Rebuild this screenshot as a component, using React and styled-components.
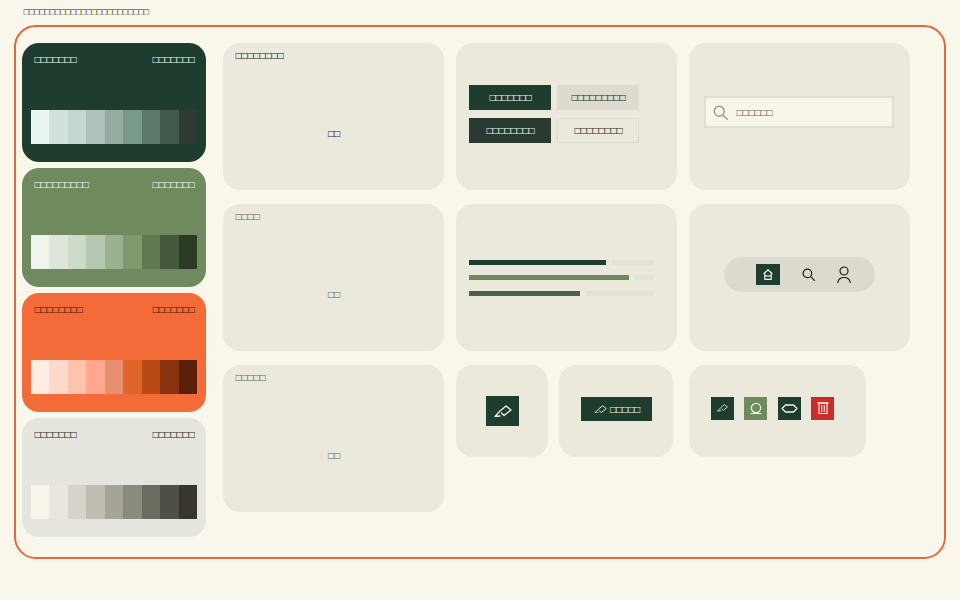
import React from "react";
import styled, { createGlobalStyle } from "styled-components";

const GlobalStyle = createGlobalStyle`
  html, body {
    margin: 0;
    padding: 0;
    background: #F9F6EC;
  }
  body {
    font-family: "DejaVu Sans", sans-serif;
    font-size: 8px;
    letter-spacing: -1.56px;
    white-space: nowrap;
    width: 960px;
    height: 600px;
    overflow: hidden;
  }
`;

// the labels show as empty boxes in the reference
const box = (n) => "\u25A1".repeat(n);

const ramps = [
  {
    name: box(7), note: box(7), bg: "#1F3D2E", fg: "#E8F5F0",
    colors: ["#E8F5F0", "#D2E1DC", "#C6D6D0", "#AEC2B9", "#95ADA1", "#789A88", "#5B7A69", "#43594D", "#2F3A32"],
  },
  {
    name: box(9), note: box(7), bg: "#6F8A5E", fg: "#F0F4EC",
    colors: ["#F0F4EC", "#DEE5DB", "#CDD9C9", "#B5C7B0", "#9AB08F", "#7F9A6E", "#5F7A50", "#46593C", "#2C3A24"],
  },
  {
    name: box(8), note: box(7), bg: "#F26B38", fg: "#4A1A06",
    colors: ["#FFEDE4", "#FFDACB", "#FFC3AE", "#FFA88F", "#E88F72", "#E06528", "#B84A14", "#88330F", "#5A2009"],
  },
  {
    name: box(7), note: box(7), bg: "#E6E5DD", fg: "#2A2A22",
    colors: ["#F8F5EA", "#E8E6DF", "#D6D4CA", "#BFBDB2", "#A6A499", "#8B8A7E", "#6C6B5F", "#504F45", "#38362C"],
  },
];

const bars = [
  { width: 137, color: "#1F3D2E" },
  { width: 160, color: "#6F8A5E" },
  { width: 111, color: "#4A6350" },
];

const KnifeIcon = ({ width = 18 }) => (
  <svg width={width} viewBox="0 0 18 12" fill="none" stroke="currentColor" strokeWidth="1.3" strokeLinejoin="round" strokeLinecap="round">
    <path d="M1 11.5 L6 11 M1 11.5 L6 6 L12 1 L17 5 L10 10.5 L7.5 8" />
  </svg>
);

const RingIcon = () => (
  <svg width="12" height="13" viewBox="0 0 12 13" fill="none" stroke="currentColor" strokeWidth="1.2" strokeLinecap="round">
    <circle cx="6" cy="6" r="4.6" />
    <path d="M1 11.5 H11" />
  </svg>
);

const HexIcon = () => (
  <svg width="17" height="9" viewBox="0 0 17 9" fill="none" stroke="currentColor" strokeWidth="1.3" strokeLinejoin="round">
    <path d="M1 4.5 L4.5 1 H12.5 L16 4.5 L12.5 8 H4.5 Z" />
  </svg>
);

const TrashIcon = () => (
  <svg width="12" height="12" viewBox="0 0 12 12" fill="none" stroke="currentColor" strokeWidth="1.1">
    <path d="M0.5 1 H11.5" strokeWidth="1.6" />
    <path d="M2 1 V11.5 H10 V1" />
    <path d="M4.7 3 V10 M7.3 3 V10" />
  </svg>
);

const HomeIcon = () => (
  <svg width="10" height="11" viewBox="0 0 10 11" fill="none" stroke="currentColor" strokeWidth="1.2" strokeLinejoin="round">
    <path d="M0.6 5 L5 0.8 L9.4 5" />
    <path d="M1.8 4.5 V10.4 H8.2 V4.5" />
    <path d="M1.8 7 H8.2" />
  </svg>
);

const SearchIcon = ({ size = 13 }) => (
  <svg width={size} height={size} viewBox="0 0 13 13" fill="none" stroke="currentColor" strokeWidth="1.2" strokeLinecap="round">
    <circle cx="5.4" cy="5.4" r="4.3" />
    <path d="M8.6 8.6 L12.4 12.4" />
  </svg>
);

const UserIcon = () => (
  <svg width="14" height="17" viewBox="0 0 14 17" fill="none" stroke="currentColor" strokeWidth="1.2" strokeLinecap="round">
    <circle cx="7" cy="5" r="4" />
    <path d="M0.8 16.5 C1.5 12.5 4 11.5 7 11.5 C10 11.5 12.5 12.5 13.2 16.5" />
  </svg>
);

export default function App() {
  return (
    <>
      <GlobalStyle />
      <Page>
        <Title>{box(24)}</Title>
        <Frame>
          <RampColumn>
            {ramps.map((ramp, i) => (
              <RampCard key={i} $bg={ramp.bg} $fg={ramp.fg}>
                <RampHead>
                  <span>{ramp.name}</span>
                  <span>{ramp.note}</span>
                </RampHead>
                <Swatches>
                  {ramp.colors.map((c) => (
                    <Swatch key={c} $color={c} />
                  ))}
                </Swatches>
              </RampCard>
            ))}
          </RampColumn>
          <Grid>
            <TextCard>
              <CardLabel>{box(8)}</CardLabel>
              <Sample>{box(2)}</Sample>
            </TextCard>
            <LeftCard>
              <ButtonGrid>
                <Button $bg="#1F3D2E" $fg="#E8F5F0">{box(7)}</Button>
                <Button $bg="#DDDBCF" $fg="#2A2A22">{box(9)}</Button>
                <Button $bg="#2A3A30" $fg="#E8F5F0">{box(8)}</Button>
                <Button $bg="#EBE8DC" $fg="#2A2A22" $line="#DFDCCF">{box(8)}</Button>
              </ButtonGrid>
            </LeftCard>
            <LeftCard>
              <SearchBox>
                <SearchGlyph><SearchIcon size={15} /></SearchGlyph>
                <span>{box(6)}</span>
              </SearchBox>
            </LeftCard>

            <TextCard $muted>
              <CardLabel>{box(4)}</CardLabel>
              <Sample>{box(2)}</Sample>
            </TextCard>
            <LeftCard>
              <BarList>
                {bars.map((bar) => (
                  <BarRow key={bar.color}>
                    <BarFill $color={bar.color} style={{ width: bar.width }} />
                    <BarRest />
                  </BarRow>
                ))}
              </BarList>
            </LeftCard>
            <CenterCard>
              <NavPill>
                <NavItem $active><HomeIcon /></NavItem>
                <NavItem><SearchIcon /></NavItem>
                <NavItem><UserIcon /></NavItem>
              </NavPill>
            </CenterCard>

            <TextCard $muted>
              <CardLabel>{box(5)}</CardLabel>
              <Sample>{box(2)}</Sample>
            </TextCard>
            <SmallRow>
              <SmallCard $width={92}>
                <SquareButton><KnifeIcon /></SquareButton>
              </SmallCard>
              <SmallCard $width={114}>
                <IconLabelButton><KnifeIcon width={13} />{box(5)}</IconLabelButton>
              </SmallCard>
            </SmallRow>
            <ActionCard>
              <ActionButton $bg="#1F3D2E" $fg="#F0F4EC"><KnifeIcon width={11} /></ActionButton>
              <ActionButton $bg="#6F8A5E" $fg="#F0F4EC"><RingIcon /></ActionButton>
              <ActionButton $bg="#1F3D2E" $fg="#F0F4EC"><HexIcon /></ActionButton>
              <ActionButton $bg="#CC2B2B" $fg="#F8F5EA"><TrashIcon /></ActionButton>
            </ActionCard>
          </Grid>
        </Frame>
      </Page>
    </>
  );
}

const Page = styled.div`
  width: 960px;
  height: 600px;
  padding: 7px 14px 0;
  box-sizing: border-box;
`;

const Title = styled.h1`
  margin: 0 0 7px 9px;
  height: 11px;
  font-size: 7px;
  line-height: 11px;
  font-weight: 400;
  color: #2A2A22;
  letter-spacing: -1.4px;
`;

const Frame = styled.div`
  box-sizing: border-box;
  width: 932px;
  height: 534px;
  padding: 16px 6px;
  border: 2px solid #E5673A;
  border-radius: 22px;
  display: flex;
  gap: 17px;
`;

const RampColumn = styled.div`
  width: 184px;
  display: flex;
  flex-direction: column;
  gap: 6px;
`;

const RampCard = styled.div`
  box-sizing: border-box;
  height: 119px;
  padding: 11px 9px;
  border-radius: 17px;
  background: ${(p) => p.$bg};
  color: ${(p) => p.$fg};
`;

const RampHead = styled.div`
  display: flex;
  justify-content: space-between;
  padding: 0 3px;
  line-height: 12px;
  margin-bottom: 44px;
`;

const Swatches = styled.div`
  display: flex;
  height: 34px;
`;

const Swatch = styled.div`
  flex: 1;
  background: ${(p) => p.$color};
`;

const Grid = styled.div`
  display: grid;
  grid-template-columns: repeat(3, 221px);
  grid-template-rows: repeat(3, 147px);
  column-gap: 12px;
  row-gap: 14px;
`;

const Card = styled.div`
  box-sizing: border-box;
  background: #EBE8DC;
  border-radius: 17px;
`;

const TextCard = styled(Card)`
  padding: 7px 12px;
  color: ${(p) => (p.$muted ? "#6C6B5F" : "#2A2A22")};
  display: flex;
  flex-direction: column;
`;

const CardLabel = styled.div`
  line-height: 12px;
`;

const Sample = styled.div`
  margin-top: 66px;
  text-align: center;
  line-height: 12px;
`;

const CenterCard = styled(Card)`
  display: flex;
  align-items: center;
  justify-content: center;
  padding-bottom: 6px;
`;

const LeftCard = styled(Card)`
  display: flex;
  align-items: center;
  padding: 0 13px 5px;
`;

const ButtonGrid = styled.div`
  display: grid;
  grid-template-columns: 82px 82px;
  gap: 8px 6px;
`;

const Button = styled.div`
  box-sizing: border-box;
  height: 25px;
  display: flex;
  align-items: center;
  justify-content: center;
  background: ${(p) => p.$bg};
  color: ${(p) => p.$fg};
  border: ${(p) => (p.$line ? `1px solid ${p.$line}` : "none")};
`;

const SearchBox = styled.div`
  box-sizing: border-box;
  width: 190px;
  height: 32px;
  margin: 0 0 4px 2px;
  display: flex;
  align-items: center;
  gap: 8px;
  padding: 0 7px;
  background: #F8F5E9;
  border: 2px solid #E2DFD0;
  color: #6C6B5F;
`;

const SearchGlyph = styled.span`
  display: flex;
  color: #9A998B;
`;

const BarList = styled.div`
  width: 184px;
  margin-top: 5px;
  display: flex;
  flex-direction: column;
  gap: 10.5px;
`;

const BarRow = styled.div`
  display: flex;
  gap: 6px;
  height: 5px;
`;

const BarFill = styled.div`
  background: ${(p) => p.$color};
`;

const BarRest = styled.div`
  flex: 1;
  background: #E4E1D5;
`;

const NavPill = styled.div`
  box-sizing: border-box;
  width: 151px;
  height: 35px;
  padding-left: 32px;
  border-radius: 18px;
  background: #DCDACE;
  display: flex;
  align-items: center;
  gap: 22px;
`;

const NavItem = styled.div`
  width: ${(p) => (p.$active ? "24px" : "auto")};
  height: 21px;
  display: flex;
  align-items: center;
  justify-content: center;
  background: ${(p) => (p.$active ? "#1F3D2E" : "transparent")};
  color: ${(p) => (p.$active ? "#F0F4EC" : "#1E1E18")};
`;

const SmallRow = styled.div`
  display: flex;
  gap: 11px;
  height: 92px;
`;

const SmallCard = styled(Card)`
  width: ${(p) => p.$width}px;
  display: flex;
  align-items: center;
  justify-content: center;
`;

const SquareButton = styled.div`
  width: 33px;
  height: 30px;
  margin-left: 1px;
  display: flex;
  align-items: center;
  justify-content: center;
  background: #1F3D2E;
  color: #F0F4EC;
`;

const IconLabelButton = styled.div`
  width: 71px;
  height: 24px;
  margin: 0 0 4px 1px;
  display: flex;
  align-items: center;
  justify-content: center;
  gap: 3px;
  background: #1F3D2E;
  color: #E8F5F0;
`;

const ActionCard = styled(Card)`
  width: 177px;
  height: 92px;
  padding: 0 22px 6px;
  display: flex;
  align-items: center;
  gap: 10.4px;
`;

const ActionButton = styled.div`
  width: 23px;
  height: 23px;
  flex: none;
  display: flex;
  align-items: center;
  justify-content: center;
  background: ${(p) => p.$bg};
  color: ${(p) => p.$fg};
`;
